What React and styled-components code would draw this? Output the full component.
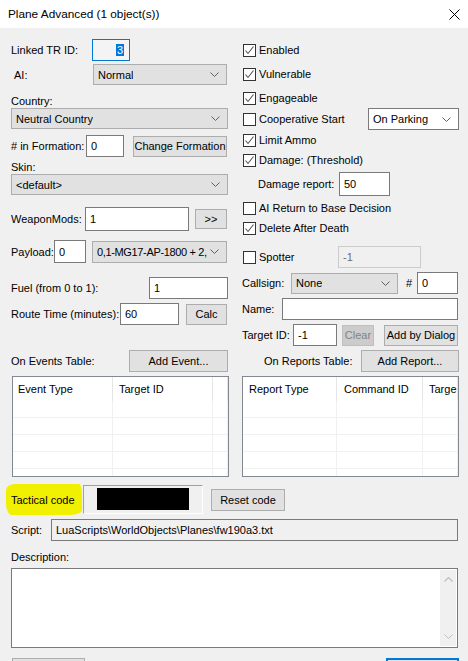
import React from "react";
import styled, { createGlobalStyle } from "styled-components";

const GlobalStyle = createGlobalStyle`
  body {
    margin: 0;
    background: #f0f0f0;
    font-family: "Liberation Sans", Arial, sans-serif;
    font-size: 11px;
    color: #000;
  }
`;

const Window = styled.div`
  width: 468px;
  height: 661px;
  overflow: hidden;
  background: #f0f0f0;
`;

const TitleBar = styled.div`
  height: 28px;
  background: #fff;
  display: flex;
  align-items: center;
  justify-content: space-between;
  padding: 0 8px 0 8px;
  font-size: 11.8px;
`;

const Body = styled.div`
  padding: 0 9px 0 11px;
`;

const TwoCols = styled.div`
  display: grid;
  grid-template-columns: 217px 217px;
  column-gap: 14px;
  margin-top: ${(p) => p.$mt || 0}px;
`;

const Col = styled.div`
  display: flex;
  flex-direction: column;
`;

const Row = styled.div`
  display: flex;
  align-items: center;
  height: ${(p) => p.$h || 22}px;
  margin-top: ${(p) => p.$mt || 0}px;
  padding-left: ${(p) => p.$pl || 0}px;
  flex-shrink: 0;
`;

const Label = styled.span`
  display: inline-block;
  width: ${(p) => (p.$w ? `${p.$w}px` : "auto")};
  padding-left: ${(p) => p.$pl || 0}px;
  white-space: nowrap;
  flex-shrink: 0;
  box-sizing: border-box;
`;

const Field = styled.div`
  box-sizing: border-box;
  width: ${(p) => p.$w}px;
  height: ${(p) => p.$h || 22}px;
  margin-left: ${(p) => (p.$ml === "auto" ? "auto" : `${p.$ml || 0}px`)};
  border: 1px solid ${(p) => (p.$focus ? "#0078d7" : p.$disabled ? "#cccccc" : "#7a7a7a")};
  background: ${(p) => p.$bg || "#fff"};
  color: ${(p) => (p.$disabled ? "#6d6d6d" : "#000")};
  display: flex;
  align-items: center;
  justify-content: ${(p) => (p.$right ? "flex-end" : "flex-start")};
  padding: 0 ${(p) => (p.$right ? 5 : 4)}px;
  white-space: nowrap;
  overflow: hidden;
  flex-shrink: 0;
`;

const Selected = styled.span`
  background: #0078d7;
  color: #fff;
  padding: 0 1px;
`;

const ComboBox = styled.div`
  box-sizing: border-box;
  width: ${(p) => (p.$w ? `${p.$w}px` : "100%")};
  height: ${(p) => p.$h || 21}px;
  margin-left: ${(p) => (p.$ml === "auto" ? "auto" : `${p.$ml || 0}px`)};
  border: 1px solid ${(p) => (p.$white ? "#7a7a7a" : "#adadad")};
  background: ${(p) => (p.$white ? "#fff" : "#e1e1e1")};
  display: flex;
  align-items: center;
  justify-content: space-between;
  gap: 2px;
  padding: 0 7px 0 4px;
  white-space: nowrap;
  overflow: hidden;
  flex-shrink: 0;
  letter-spacing: ${(p) => (p.$tight ? "-0.35px" : "normal")};
  span {
    overflow: hidden;
  }
  svg {
    flex-shrink: 0;
  }
`;

const Button = styled.div`
  box-sizing: border-box;
  width: ${(p) => p.$w}px;
  height: ${(p) => p.$h || 21}px;
  margin-left: ${(p) => (p.$ml === "auto" ? "auto" : `${p.$ml || 0}px`)};
  border: ${(p) => (p.$default ? "2px solid #0078d7" : p.disabled ? "1px solid #bfbfbf" : "1px solid #adadad")};
  background: ${(p) => (p.disabled ? "#cccccc" : "#e1e1e1")};
  color: ${(p) => (p.disabled ? "#838383" : "#000")};
  display: flex;
  align-items: center;
  justify-content: center;
  white-space: nowrap;
  flex-shrink: 0;
`;

const CheckItem = styled.div`
  display: flex;
  align-items: center;
  gap: 3px;
  width: ${(p) => (p.$w ? `${p.$w}px` : "auto")};
  flex-shrink: 0;
  white-space: nowrap;
`;

const Box = styled.div`
  box-sizing: border-box;
  width: 13px;
  height: 13px;
  border: 1px solid #333;
  background: #fff;
  display: flex;
  align-items: center;
  justify-content: center;
  margin-left: 1px;
`;

const Hash = styled.span`
  width: 19px;
  padding-left: 8px;
  box-sizing: border-box;
  flex-shrink: 0;
`;

const TableWrap = styled.div`
  box-sizing: border-box;
  width: 217px;
  height: 101px;
  margin-top: 4px;
  margin-left: ${(p) => p.$ml || 0}px;
  border: 1px solid #828790;
  background: #fff;
  overflow: hidden;
`;

const HeadRow = styled.div`
  display: flex;
  height: 24px;
`;

const HeadCell = styled.div`
  box-sizing: border-box;
  width: ${(p) => p.$w}px;
  flex-shrink: 0;
  padding-left: ${(p) => p.$pl || 5}px;
  display: flex;
  align-items: center;
  border-right: 1px solid #e5e5e5;
  white-space: nowrap;
  overflow: hidden;
`;

const GridRow = styled.div`
  display: flex;
  height: 17px;
  box-sizing: border-box;
  border-bottom: 1px solid #f0f0f0;
`;

const GridCell = styled.div`
  box-sizing: border-box;
  width: ${(p) => p.$w}px;
  flex-shrink: 0;
  border-right: 1px solid #f0f0f0;
`;

const Highlight = styled.span`
  display: inline-flex;
  align-items: center;
  box-sizing: border-box;
  width: 76px;
  height: 31px;
  margin-left: -5px;
  padding-left: 5px;
  background: #f0f000;
  border-radius: 9px 3px 12px 6px / 6px 10px 5px 12px;
  flex-shrink: 0;
`;

const Sunken = styled.div`
  box-sizing: border-box;
  width: 120px;
  height: 29px;
  margin-left: 1px;
  border-top: 1px solid #a0a0a0;
  border-left: 1px solid #a0a0a0;
  border-right: 1px solid #fff;
  border-bottom: 1px solid #fff;
  padding: 2px 13px 2px 13px;
  flex-shrink: 0;
`;

const Blackout = styled.div`
  width: 92px;
  height: 22px;
  background: #000;
`;

const TextArea = styled.div`
  box-sizing: border-box;
  width: 447px;
  height: 80px;
  margin-top: 4px;
  border: 1px solid #7a7a7a;
  background: #fff;
  display: flex;
  justify-content: flex-end;
  padding: 1px;
`;

const ScrollBar = styled.div`
  width: 16px;
  background: #f0f0f0;
  display: flex;
  flex-direction: column;
  justify-content: space-between;
  align-items: center;
  padding: 7px 0;
`;

const Footer = styled.div`
  display: flex;
  justify-content: space-between;
  margin-top: 10px;
  padding-left: 1px;
`;

const Chevron = ({ color = "#606060" }) => (
  <svg width="9" height="5" viewBox="0 0 9 5">
    <polyline points="0.5,0.5 4.5,4.5 8.5,0.5" fill="none" stroke={color} strokeWidth="1" />
  </svg>
);

const Combo = ({ children, ...rest }) => (
  <ComboBox {...rest}>
    <span>{children}</span>
    <Chevron />
  </ComboBox>
);

const Check = ({ checked, children, w }) => (
  <CheckItem $w={w}>
    <Box>
      {checked && (
        <svg width="11" height="11" viewBox="0 0 11 11">
          <polyline points="1.5,5.5 4,8.5 9.5,1.5" fill="none" stroke="#555" strokeWidth="1.1" />
        </svg>
      )}
    </Box>
    <span>{children}</span>
  </CheckItem>
);

const Table = ({ cols, ml }) => (
  <TableWrap $ml={ml}>
    <HeadRow>
      {cols.map((c, i) => (
        <HeadCell key={i} $w={c.w} $pl={c.pl}>
          {c.title}
        </HeadCell>
      ))}
    </HeadRow>
    {[0, 1, 2, 3, 4].map((r) => (
      <GridRow key={r}>
        {cols.map((c, i) => (
          <GridCell key={i} $w={c.w} />
        ))}
      </GridRow>
    ))}
  </TableWrap>
);

const eventCols = [
  { title: "Event Type", w: 100, pl: 5 },
  { title: "Target ID", w: 100, pl: 6 },
  { title: "", w: 15 },
];

const reportCols = [
  { title: "Report Type", w: 94, pl: 6 },
  { title: "Command ID", w: 86, pl: 7 },
  { title: "Targe", w: 35, pl: 6 },
];

export default function App() {
  return (
    <Window>
      <GlobalStyle />
      <TitleBar>
        <span>Plane Advanced (1 object(s))</span>
        <svg width="11" height="11" viewBox="0 0 11 11">
          <path d="M0.5 0.5 L10.5 10.5 M10.5 0.5 L0.5 10.5" stroke="#000" strokeWidth="1" />
        </svg>
      </TitleBar>
      <Body>
        <TwoCols>
          <Col>
            <Row $h={22} $mt={11}>
              <Label $w={81}>Linked TR ID:</Label>
              <Field $w={38} $focus $bg="#f4f4f4" $right>
                <Selected>3</Selected>
              </Field>
            </Row>
            <Row $h={21} $mt={3}>
              <Label $w={82} $pl={3}>AI:</Label>
              <Combo $w={134}>Normal</Combo>
            </Row>
            <Row $h={14} $mt={9}>
              <Label>Country:</Label>
            </Row>
            <Row $h={21}>
              <Combo>Neutral Country</Combo>
            </Row>
            <Row $h={22} $mt={6}>
              <Label $w={75}># in Formation:</Label>
              <Field $w={38}>0</Field>
              <Button $w={94} $ml={9}>Change Formation</Button>
            </Row>
            <Row $h={14} $mt={3}>
              <Label>Skin:</Label>
            </Row>
            <Row $h={21}>
              <Combo>&lt;default&gt;</Combo>
            </Row>
            <Row $h={24} $mt={12}>
              <Label $w={74}>WeaponMods:</Label>
              <Field $w={104} $h={24}>1</Field>
              <Button $w={32} $h={20} $ml={6}>&gt;&gt;</Button>
            </Row>
            <Row $h={23} $mt={9}>
              <Label $w={43}>Payload:</Label>
              <Field $w={32} $h={23}>0</Field>
              <Combo $w={135} $h={22} $ml={6} $tight>0,1-MG17-AP-1800 + 2,</Combo>
            </Row>
            <Row $h={22} $mt={14}>
              <Label>Fuel (from 0 to 1):</Label>
              <Field $w={79} $ml="auto">1</Field>
            </Row>
            <Row $h={22} $mt={4}>
              <Label $w={109}>Route Time (minutes):</Label>
              <Field $w={59}>60</Field>
              <Button $w={41} $ml={7}>Calc</Button>
            </Row>
          </Col>
          <Col>
            <Row $h={20} $mt={12}>
              <Check checked>Enabled</Check>
            </Row>
            <Row $h={20} $mt={4}>
              <Check checked>Vulnerable</Check>
            </Row>
            <Row $h={20} $mt={4}>
              <Check checked>Engageable</Check>
            </Row>
            <Row $h={22}>
              <Check>Cooperative Start</Check>
              <Combo $w={91} $h={22} $ml="auto" $white>On Parking</Combo>
            </Row>
            <Row $h={20}>
              <Check checked>Limit Ammo</Check>
            </Row>
            <Row $h={20}>
              <Check checked>Damage: (Threshold)</Check>
            </Row>
            <Row $h={24} $mt={2}>
              <Label $w={97} $pl={16}>Damage report:</Label>
              <Field $w={51} $h={24}>50</Field>
            </Row>
            <Row $h={20} $mt={2}>
              <Check>AI Return to Base Decision</Check>
            </Row>
            <Row $h={20}>
              <Check checked>Delete After Death</Check>
            </Row>
            <Row $h={22} $mt={8}>
              <Check w={96}>Spotter</Check>
              <Field $w={83} $disabled $bg="#f0f0f0">-1</Field>
            </Row>
            <Row $h={22} $mt={4}>
              <Label $w={49}>Callsign:</Label>
              <Combo $w={107}>None</Combo>
              <Hash>#</Hash>
              <Field $w={41}>0</Field>
            </Row>
            <Row $h={22} $mt={4}>
              <Label $w={40}>Name:</Label>
              <Field $w={176} />
            </Row>
            <Row $h={22} $mt={4}>
              <Label $w={51}>Target ID:</Label>
              <Field $w={44}>-1</Field>
              <Button $w={32} $ml={5} disabled>Clear</Button>
              <Button $w={74} $ml={10}>Add by Dialog</Button>
            </Row>
          </Col>
        </TwoCols>
        <TwoCols $mt={4}>
          <Col>
            <Row $h={22}>
              <Label>On Events Table:</Label>
              <Button $w={99} $h={22} $ml="auto">Add Event...</Button>
            </Row>
            <Table cols={eventCols} ml={1} />
          </Col>
          <Col>
            <Row $h={22}>
              <Label $pl={22}>On Reports Table:</Label>
              <Button $w={98} $h={22} $ml="auto">Add Report...</Button>
            </Row>
            <Table cols={reportCols} />
          </Col>
        </TwoCols>
        <Row $h={29} $mt={8}>
          <Highlight>Tactical code</Highlight>
          <Sunken>
            <Blackout />
          </Sunken>
          <Button $w={74} $h={22} $ml={8}>Reset code</Button>
        </Row>
        <Row $h={22} $mt={5}>
          <Label $w={40}>Script:</Label>
          <Field $w={407} $bg="#f0f0f0">LuaScripts\WorldObjects\Planes\fw190a3.txt</Field>
        </Row>
        <Row $h={14} $mt={9}>
          <Label>Description:</Label>
        </Row>
        <TextArea>
          <ScrollBar>
            <svg width="9" height="5" viewBox="0 0 9 5">
              <polyline points="0.5,4.5 4.5,0.5 8.5,4.5" fill="none" stroke="#c0c0c0" strokeWidth="1.2" />
            </svg>
            <Chevron color="#c0c0c0" />
          </ScrollBar>
        </TextArea>
        <Footer>
          <Button $w={73} $h={23} />
          <Button $w={73} $h={23} $default />
        </Footer>
      </Body>
    </Window>
  );
}
